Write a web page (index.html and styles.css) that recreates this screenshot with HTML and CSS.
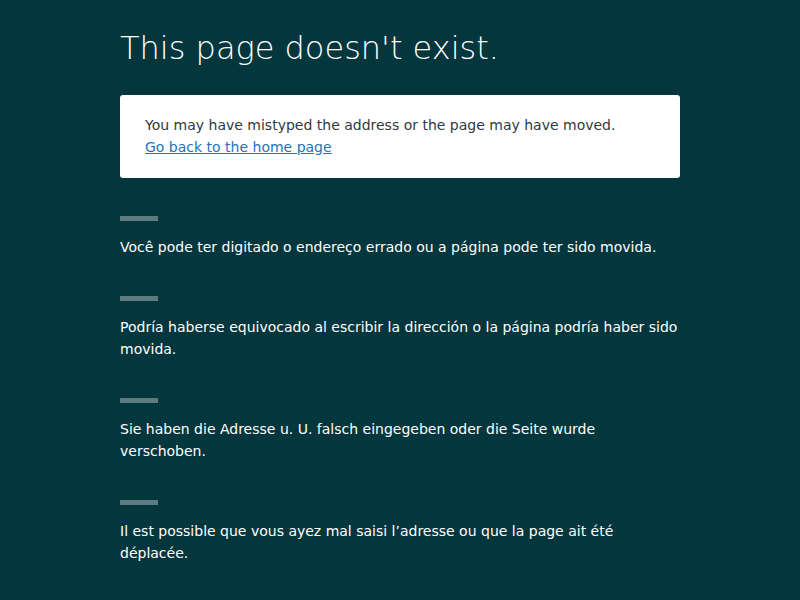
FILE: index.html
```html
<!DOCTYPE html>
<html lang="en">
<head>
<meta charset="utf-8">
<title>This page doesn't exist.</title>
<link rel="stylesheet" href="styles.css">
</head>
<body>
<main class="page">
  <h1 class="title">This page doesn't exist.</h1>
  <div class="card">
    <p class="card-text">You may have mistyped the address or the page may have moved.</p>
    <a class="card-link" href="#">Go back to the home page</a>
  </div>
  <section class="lang">
    <div class="bar"></div>
    <p class="lang-text">Você pode ter digitado o endereço errado ou a página pode ter sido movida.</p>
  </section>
  <section class="lang">
    <div class="bar"></div>
    <p class="lang-text">Podría haberse equivocado al escribir la dirección o la página podría haber sido movida.</p>
  </section>
  <section class="lang">
    <div class="bar"></div>
    <p class="lang-text">Sie haben die Adresse u. U. falsch eingegeben oder die Seite wurde verschoben.</p>
  </section>
  <section class="lang">
    <div class="bar"></div>
    <p class="lang-text">Il est possible que vous ayez mal saisi l’adresse ou que la page ait été déplacée.</p>
  </section>
</main>
</body>
</html>
```
FILE: styles.css
```css
html, body {
  margin: 0;
  padding: 0;
  background: #03363d;
}
body {
  font-family: "DejaVu Sans", sans-serif;
  font-size: 14px;
  line-height: 22px;
  color: #fff;
}
.page {
  width: 560px;
  margin: 0 auto;
  padding-top: 27px;
}
.title {
  margin: 0 0 26px;
  font-size: 32px;
  line-height: 42px;
  font-weight: 200;
  color: #fff;
}
.card {
  background: #fff;
  border-radius: 3px;
  padding: 19px 25px 20px;
  margin-bottom: 38px;
}
.card-text {
  margin: 0;
  color: #2f3941;
}
.card-link {
  color: #1f73b7;
  text-decoration: underline;
}
.lang {
  margin-bottom: 38px;
}
.bar {
  width: 38px;
  height: 5px;
  background: #5e7b7f;
  margin-bottom: 15px;
}
.lang-text {
  margin: 0;
}
```
